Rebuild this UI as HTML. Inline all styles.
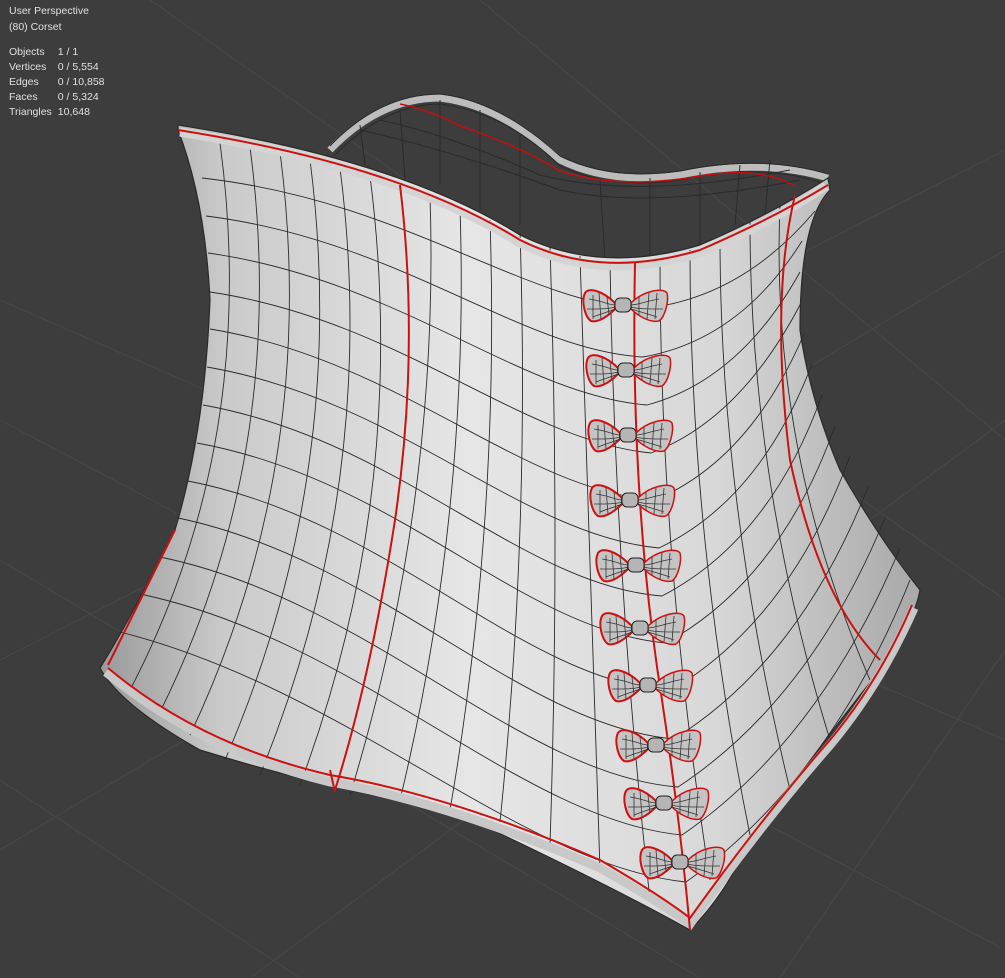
<!DOCTYPE html>
<html><head><style>
html,body{margin:0;padding:0;background:#3d3d3d;}
.wrap{position:relative;width:1005px;height:978px;overflow:hidden;background:#3d3d3d;}
.info{position:absolute;left:9px;top:3px;font:10.5px/16px "Liberation Sans",sans-serif;color:#e0e0e0;}
.info table{border-collapse:collapse;margin-top:10px;}
.info td{padding:0 6px 0 0;font:10.5px/15px "Liberation Sans",sans-serif;color:#e0e0e0;}
svg{position:absolute;left:0;top:0;}
</style></head><body><div class="wrap">
<svg width="1005" height="978" viewBox="0 0 1005 978">
<defs>
<linearGradient id="g" x1="0" x2="1" y1="0" y2="0">
<stop offset="0" stop-color="#9a9a9a"/><stop offset="0.15" stop-color="#cacaca"/>
<stop offset="0.45" stop-color="#e6e6e6"/><stop offset="0.75" stop-color="#d8d8d8"/>
<stop offset="1" stop-color="#a8a8a8"/></linearGradient>
<g id="bow">
<path d="M-8,-2 C-20,-14 -34,-18 -38,-12 C-42,-4 -38,12 -32,16 C-24,18 -14,10 -8,4 Z" fill="#c4c4c4" stroke="#d01010" stroke-width="2"/>
<path d="M8,-2 C20,-14 40,-18 44,-12 C46,-4 42,12 36,16 C26,18 14,10 8,4 Z" fill="#c4c4c4" stroke="#d01010" stroke-width="1.5"/>
<path d="M-34,-6 C-20,-4 -14,0 -8,0 M-36,4 C-22,4 -14,4 -8,2 M-30,12 C-20,8 -12,6 -8,4 M-24,-12 L-22,14 M-16,-8 L-14,10 M-30,-10 L-30,14 M36,-6 C24,-4 14,0 8,0 M40,4 C26,4 14,4 8,2 M34,12 C22,8 14,6 8,4 M26,-12 L24,14 M16,-8 L16,10 M34,-12 L32,14" stroke="#333" stroke-width="0.8" fill="none"/>
<rect x="-8" y="-7" width="16" height="14" rx="5" fill="#b5b5b5" stroke="#222" stroke-width="1"/>
</g>
</defs>
<g stroke="#474747" stroke-width="1.2" fill="none">
<path d="M0,300 L1005,740"/><path d="M0,420 L1005,950"/><path d="M0,560 L700,978"/>
<path d="M0,780 L300,978"/><path d="M1005,250 L0,850"/><path d="M1005,420 L250,978"/>
<path d="M1005,150 L0,660"/><path d="M480,0 L1005,440"/><path d="M150,0 L1005,600"/>
<path d="M1005,650 L780,978"/>
</g>
<path d="M330,150 Q380,98 440,98 Q500,105 560,160 Q610,185 680,175 Q760,158 828,178" stroke="#bdbdbd" stroke-width="7" fill="none"/>
<g stroke="#2a2a2a" stroke-width="1" fill="none">
<path d="M330,146 Q380,94 440,94 Q500,101 560,156 Q610,181 680,171 Q760,154 828,174"/>
<path d="M335,155 Q385,104 440,104 Q505,112 560,166 Q610,190 680,180 Q760,162 822,183"/>
<path d="M440,100 L440,185 M480,110 L480,210 M520,135 L520,225 M600,180 L605,260 M700,172 L700,245 M770,160 L765,215 M400,110 L405,180 M360,125 L365,165 M650,178 L650,255 M740,165 L735,225"/>
<path d="M360,130 Q450,150 560,190 Q650,210 800,180"/>
<path d="M380,120 Q450,135 540,175 Q640,200 790,170"/>
</g>
<path d="M400,104 Q430,110 460,126 Q520,146 560,171 Q620,190 700,176 Q760,166 795,186" stroke="#c01010" stroke-width="1.5" fill="none"/>
<path d="M178,125 Q400,160 520,235 Q600,275 700,245 Q770,215 828,178 L830,190 Q800,220 800,330 Q810,400 840,470 Q880,540 920,590 Q915,620 880,670 Q800,770 740,860 Q720,900 690,930 Q600,880 450,810 Q330,790 200,750 Q120,705 100,668 Q130,620 175,530 Q205,430 210,300 Q205,200 178,130 Z" fill="url(#g)" stroke="#2a2a2a" stroke-width="1.2"/>
<g stroke="#2a2a2a" stroke-width="0.9" fill="none">
<path d="M202,178 C400,200 520,300 639,309 Q740,300 815,211"/>
<path d="M206,216 C400,240 520,350 643,357 Q740,340 802,241"/>
<path d="M208,253 C400,280 520,395 647,405 Q740,380 800,272"/>
<path d="M210,292 C400,320 520,440 651,453 Q740,420 801,303"/>
<path d="M210,329 C400,360 520,490 655,500 Q750,460 804,334"/>
<path d="M207,367 C400,400 520,535 659,548 Q760,500 812,364"/>
<path d="M203,405 C400,440 520,585 662,596 Q770,540 822,395"/>
<path d="M197,443 C400,480 520,630 666,643 Q780,580 835,426"/>
<path d="M188,481 C390,520 520,680 670,691 Q790,620 850,456"/>
<path d="M178,518 C380,560 520,725 674,739 Q800,660 868,487"/>
<path d="M160,557 C370,600 520,775 678,787 Q810,700 885,518"/>
<path d="M140,594 C360,640 520,820 682,835 Q820,740 900,548"/>
<path d="M120,632 C350,690 520,865 686,882 Q830,780 910,580"/>
<path d="M220,143 Q260,440 130,690"/><path d="M250,147 Q290,450 160,712"/>
<path d="M280,152 Q320,460 190,735"/><path d="M310,160 Q350,470 225,760"/>
<path d="M340,168 Q380,480 260,775"/><path d="M370,176 Q410,490 300,785"/>
<path d="M430,195 Q440,500 350,795"/><path d="M460,208 Q470,510 400,800"/>
<path d="M490,220 Q500,520 450,810"/><path d="M520,233 Q530,530 500,822"/>
<path d="M550,247 Q560,540 550,845"/><path d="M580,256 Q590,560 600,870"/>
<path d="M610,262 Q615,580 650,900"/>
<path d="M660,258 Q660,560 710,880"/><path d="M690,250 Q690,540 750,835"/>
<path d="M720,240 Q720,500 790,790"/><path d="M750,222 Q750,480 830,740"/>
<path d="M780,205 Q770,450 870,680"/>
</g>
<path d="M180,132 Q400,168 520,243 Q600,283 700,253 Q770,223 826,186" stroke="#d4d4d4" stroke-width="9" fill="none"/>
<path d="M106,672 Q200,750 330,782 Q450,803 600,868 Q660,902 690,924 Q760,825 830,745 Q880,685 914,608" stroke="#c8c8c8" stroke-width="9" fill="none"/>
<g stroke="#cc1111" stroke-width="2" fill="none">
<path d="M400,185 Q420,350 395,520 Q370,680 335,790"/>
<path d="M635,262 Q630,500 662,700 Q680,820 690,930"/>
<path d="M795,195 Q770,300 790,460 Q820,600 880,660"/>
<path d="M178,130 Q400,165 520,240 Q600,280 700,250 Q770,220 828,185"/>
<path d="M108,668 Q200,745 330,775 Q450,795 600,860 Q660,895 690,918 Q760,820 830,740 Q880,680 912,605"/>
<path d="M175,530 Q140,600 108,665"/>
<path d="M330,770 L335,792"/>
</g>
<use href="#bow" x="623" y="305"/><use href="#bow" x="626" y="370"/>
<use href="#bow" x="628" y="435"/><use href="#bow" x="630" y="500"/>
<use href="#bow" x="636" y="565"/><use href="#bow" x="640" y="628"/>
<use href="#bow" x="648" y="685"/><use href="#bow" x="656" y="745"/>
<use href="#bow" x="664" y="803"/><use href="#bow" x="680" y="862"/>
</svg>
<div class="info">User Perspective<br>(80) Corset
<table><tr><td>Objects</td><td>1 / 1</td></tr><tr><td>Vertices</td><td>0 / 5,554</td></tr><tr><td>Edges</td><td>0 / 10,858</td></tr><tr><td>Faces</td><td>0 / 5,324</td></tr><tr><td>Triangles</td><td>10,648</td></tr></table></div>
</div></body></html>
